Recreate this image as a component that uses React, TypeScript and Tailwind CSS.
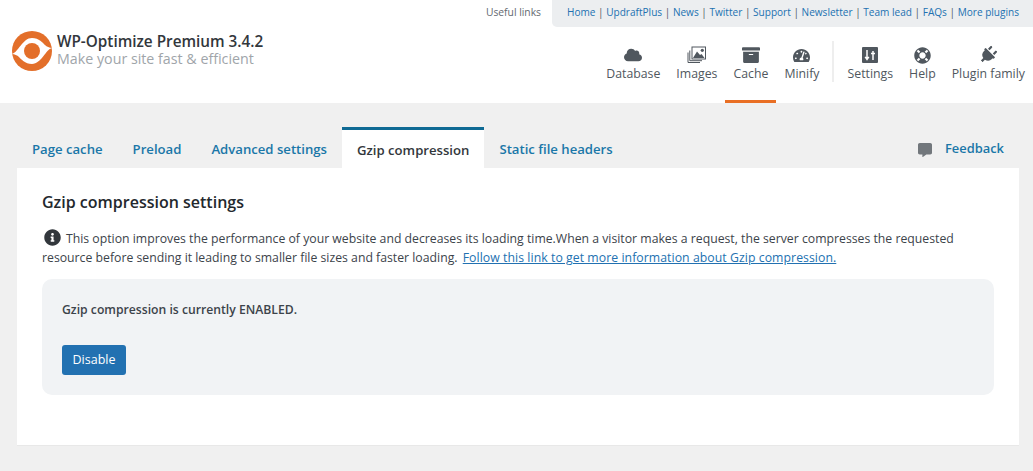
import type { ReactNode } from "react"
import { FaArchive, FaCloud, FaCommentAlt, FaInfoCircle, FaLifeRing, FaPlug, FaTachometerAlt } from "react-icons/fa"

const links = ["Home", "UpdraftPlus", "News", "Twitter", "Support", "Newsletter", "Team lead", "FAQs", "More plugins"]

function Logo() {
  return (
    <svg width="40" height="40" viewBox="0 0 40 40" className="shrink-0">
      <circle cx="20" cy="20" r="20" fill="#e36f2a" />
      <path d="M-1 23 C6 23 10 7 20 7 C27 7 31 12 33 14 C35 16 38 17 41 17 C34 17 30 33 20 33 C13 33 9 28 7 26 C5 24 2 23 -1 23Z" fill="#fff" />
      <circle cx="20" cy="20" r="8" fill="#e36f2a" />
    </svg>
  )
}

function ImagesIcon() {
  return (
    <svg width="19" height="18" viewBox="0 0 19 18">
      <path d="M1 6.5V16.5H13" fill="none" stroke="#50575e" strokeWidth="1" />
      <path d="M2.8 4.5V14.7H15" fill="none" stroke="#50575e" strokeWidth="1" />
      <rect x="5" y="1" width="13.5" height="12" fill="#fff" stroke="#50575e" strokeWidth="1" />
      <path d="M6 12L10 5.5L13 9L14.5 8L17.5 12Z" fill="#50575e" />
      <rect x="6" y="2" width="11.5" height="3" fill="#fff" />
      <circle cx="15.3" cy="4.3" r="1.6" fill="#50575e" />
    </svg>
  )
}

function SettingsIcon() {
  return (
    <svg width="16" height="16" viewBox="0 0 16 16">
      <rect width="16" height="16" rx="1" fill="#50575e" />
      <path d="M5 3V12M3.2 9.8L5 12.5L6.8 9.8M11 4V13M9 6.5H13" fill="none" stroke="#fff" strokeWidth="1.5" />
    </svg>
  )
}

type NavItemProps = { label: string; icon: ReactNode; active?: boolean }

const leftNav: NavItemProps[] = [
  { label: "Database", icon: <FaCloud className="w-[18px] h-[18px]" /> },
  { label: "Images", icon: <ImagesIcon /> },
  { label: "Cache", icon: <FaArchive className="w-[18px] h-[18px]" />, active: true },
  { label: "Minify", icon: <FaTachometerAlt className="w-[17px] h-[17px]" /> },
]

const rightNav: NavItemProps[] = [
  { label: "Settings", icon: <SettingsIcon /> },
  { label: "Help", icon: <FaLifeRing className="w-[17px] h-[17px]" /> },
  { label: "Plugin family", icon: <FaPlug className="w-[18px] h-[18px] rotate-45" /> },
]

function NavItem({ label, icon, active }: NavItemProps) {
  return (
    <div className={`flex flex-col items-center px-[8px] pt-[19px] h-[76px] border-b-[3px] ${active ? "border-[#e96f24]" : "border-transparent"}`}>
      <div className="h-[18px] flex items-center text-[#50575e]">{icon}</div>
      <span className="mt-[1px] text-[12.3px] leading-[18px] text-[#50575e] whitespace-nowrap">{label}</span>
    </div>
  )
}

export default function App() {
  return (
    <div className="h-[471px] w-[1033px] overflow-hidden bg-[#f0f0f0] font-['Open_Sans',sans-serif] text-[13px] text-[#3c434a]">
      {/* Header */}
      <div className="h-[103px] bg-white">
        <div className="flex justify-end h-[27px]">
          <span className="text-[10.3px] leading-[25px] text-[#646970] pr-[11px]">Useful links</span>
          <div className="w-[481px] bg-[#eceef0] rounded-bl-[5px] pl-[15px] text-[10.07px] leading-[25px] text-[#2271b1] whitespace-nowrap">
            {links.map((l, i) => (
              <span key={l}>
                {i > 0 && <span className="text-[#50575e]"> | </span>}
                {l}
              </span>
            ))}
          </div>
        </div>
        <div className="flex justify-between">
          <div className="flex gap-[5px] pl-[12px] pt-[4px]">
            <Logo />
            <div className="pt-[1px]">
              <div className="text-[15.3px] leading-[18px] font-semibold text-[#32373c]">WP-Optimize Premium 3.4.2</div>
              <div className="text-[14.25px] leading-[18px] text-[#a0a5aa]">Make your site fast &amp; efficient</div>
            </div>
          </div>
          <div className="flex">
            {leftNav.map((n) => (
              <NavItem key={n.label} {...n} />
            ))}
            <div className="w-[2px] h-[41px] mt-[14px] mx-[5px] bg-[#eeeeee]" />
            {rightNav.map((n) => (
              <NavItem key={n.label} {...n} />
            ))}
          </div>
        </div>
      </div>

      {/* Tabs */}
      <div className="flex items-end h-[65px] pl-[17px] pr-[29px]">
        <div className="flex flex-1 text-[13.15px] font-semibold text-[#1a77a8]">
          <div className="px-[15px] h-[41px] leading-[44px]">Page cache</div>
          <div className="px-[15px] h-[41px] leading-[44px]">Preload</div>
          <div className="px-[15px] h-[41px] leading-[44px]">Advanced settings</div>
          <div className="px-[15px] h-[41px] leading-[41px] bg-white border-t-[3px] border-[#0f6a94] text-[#32373c]">Gzip compression</div>
          <div className="px-[15px] h-[41px] leading-[44px]">Static file headers</div>
        </div>
        <div className="flex items-center gap-[13px] h-[41px] pt-[3px] text-[12.9px] font-semibold text-[#1a77a8]">
          <FaCommentAlt className="w-[14px] h-[14px] text-[#72777c] mt-[2px]" />
          Feedback
        </div>
      </div>

      {/* Card */}
      <div className="ml-[17px] w-[1002px] h-[278px] bg-white border-b border-[#e8e8e8] px-[25px] pt-[22px]">
        <h2 className="text-[16px] leading-[24px] font-semibold text-[#23282d]">Gzip compression settings</h2>
        <p className="mt-[15px] text-[12.25px] leading-[19px] text-[#3c434a]">
          <FaInfoCircle className="inline w-[17px] h-[17px] ml-[2px] mr-[5px] align-[-3px] text-[#32373c]" />
          This option improves the performance of your website and decreases its loading time.When a visitor makes a request, the server compresses the requested resource before sending it leading to smaller file sizes and faster loading.{" "}
          <span className="ml-[2px] underline tracking-[0.06px] text-[#2271b1]">Follow this link to get more information about Gzip compression.</span>
        </p>
        <div className="mt-[12px] h-[116px] rounded-[10px] bg-[#f1f3f5] px-[20px] pt-[21px]">
          <div className="text-[12.2px] leading-[20px] font-semibold text-[#3c434a]">Gzip compression is currently ENABLED.</div>
          <button className="mt-[25px] h-[30px] w-[64px] rounded-[3px] bg-[#2271b1] pt-[1px] text-[12.5px] text-white">Disable</button>
        </div>
      </div>
    </div>
  )
}
